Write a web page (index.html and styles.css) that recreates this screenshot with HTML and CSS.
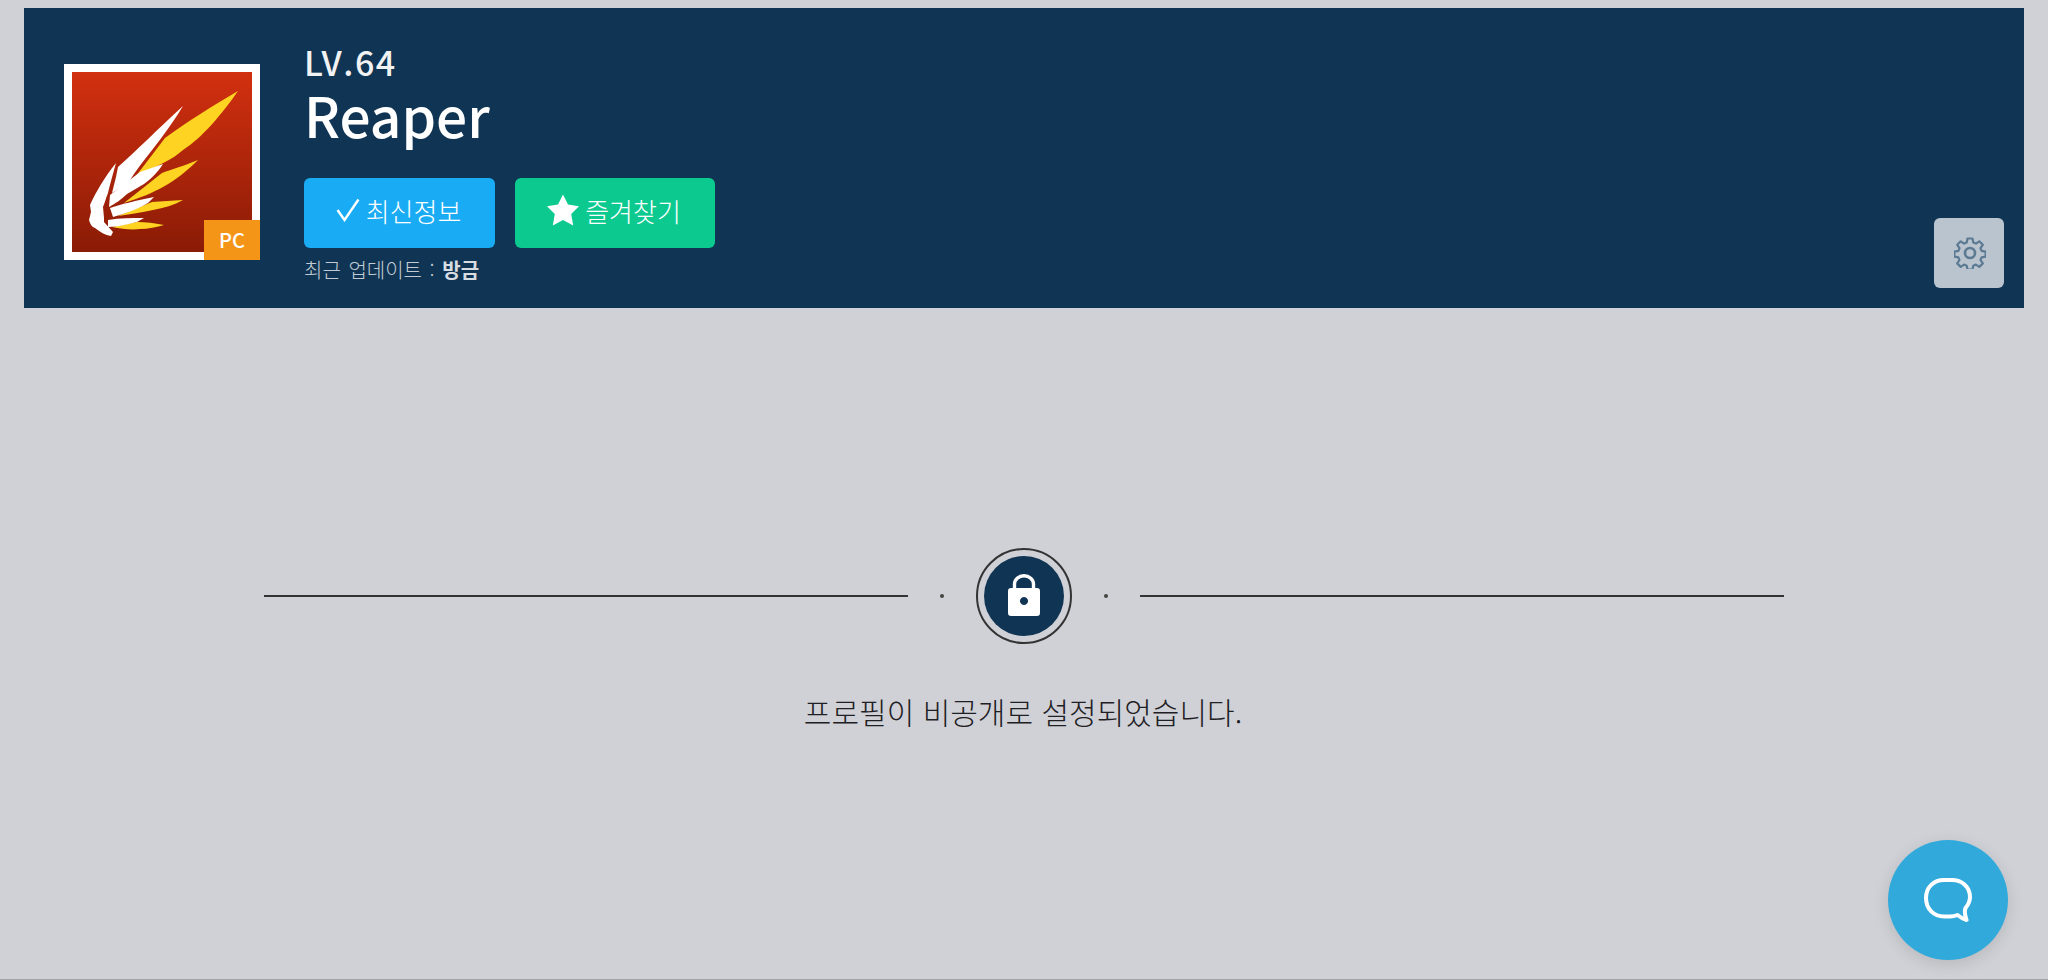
FILE: index.html
```html
<!DOCTYPE html>
<html lang="ko">

<head>
  <meta charset="UTF-8">
  <meta name="viewport" content="width=device-width, initial-scale=1.0">
  <title>Reaper</title>
  <link rel="stylesheet" href="styles.css">
</head>

<body>
  <div class="page">
    <header class="profile">
      <div class="avatar">
        <svg class="wing" viewBox="0 0 180 180" width="180" height="180">
          <defs>
            <linearGradient id="wingBg" x1="0" y1="0" x2="0" y2="1">
              <stop offset="0" stop-color="#d2300f" />
              <stop offset="1" stop-color="#8a1b06" />
            </linearGradient>
            <filter id="soft">
              <feGaussianBlur stdDeviation="0.5" />
            </filter>
          </defs>
          <rect width="180" height="180" fill="url(#wingBg)" />
          <g fill="#fed320" filter="url(#soft)">
            <path d="M166 19 C140 34 115 50 93 66 L64 104 C85 94 100 88 111 78 C130 66 150 42 166 19Z" />
            <path d="M126 88 C112 94 100 97 90 101 L52 131 C68 126 80 121 91 115 C104 108 116 98 126 88Z" />
            <path d="M111 128 C100 129 90 129 80 130 L46 144 C60 142 72 140 81 138 C92 136 102 133 111 128Z" />
            <path d="M92 153 C82 151 74 150 65 150 L40 155 C50 157 60 158 68 157 C76 157 85 155 92 153Z" />
          </g>
          <g fill="#fff" filter="url(#soft)">
            <path d="M44 91 C32 106 24 120 18 133 L19 140 L17 148 C18 152 20 155 23 156 C28 160 33 163 39 164 L41 160 L32 150 L32 146 L31 135 C33 130 34 126 36 121 C38 112 41 102 44 91Z" />
            <path d="M111 34 C85 58 65 78 46 95 L44 105 L40 121 L56 111 L62 102 C70 90 82 76 90 65 C97 55 104 46 111 34Z" />
            <path d="M91 92 L68 100 L55 110 L38 123 L37 135 C44 131 50 127 55 122 L72 112 C78 108 86 100 91 92Z" />
            <path d="M82 125 C66 128 50 132 38 136 L41 145 C52 142 64 138 76 131Z" />
            <path d="M72 146 C60 146 48 146 36 148 L36 155 C46 155 56 152 65 150Z" />
          </g>
        </svg>
        <span class="platform">PC</span>
      </div>
      <div class="info">
        <div class="level">LV.64</div>
        <h1 class="name">Reaper</h1>
        <div class="buttons">
          <a class="btn btn-refresh" href="#">
            <svg viewBox="0 0 24 24" width="24" height="24">
              <path d="M1.500 12 L8.500 22 L22.500 1.500" fill="none" stroke="#fff" stroke-width="2.400" />
            </svg>
            최신정보
          </a>
          <a class="btn btn-fav" href="#">
            <svg viewBox="0 0 32 32" width="32" height="32">
              <path d="M16 0.500 L21 10.500 L32 12.200 L24.200 20 L26.200 31.500 L16 26 L5.800 31.500 L7.800 20 L0 12.200 L11 10.500Z" fill="#fff" />
            </svg>
            즐겨찾기
          </a>
        </div>
        <div class="updated">최근 업데이트 : <b>방금</b></div>
      </div>
      <a class="settings" href="#">
        <svg viewBox="0 0 32 32" width="32" height="32" fill="none" stroke="#5d7a93" stroke-width="2.200">
          <path d="M13.500 1.500 h5 l0.800 4 l2.600 1.100 l3.400 -2.300 l3.500 3.500 l-2.300 3.400 l1.100 2.600 l4 0.800 v5 l-4 0.800 l-1.100 2.600 l2.300 3.400 l-3.500 3.500 l-3.400 -2.300 l-2.600 1.100 l-0.800 4 h-5 l-0.800 -4 l-2.600 -1.100 l-3.400 2.300 l-3.500 -3.500 l2.300 -3.400 l-1.100 -2.600 l-4 -0.800 v-5 l4 -0.800 l1.100 -2.600 l-2.300 -3.400 l3.500 -3.500 l3.400 2.300 l2.600 -1.100Z" stroke-linejoin="round" />
          <circle cx="16" cy="16" r="5" stroke-width="2.600" />
        </svg>
      </a>
    </header>

    <main class="private">
      <div class="divider">
        <span class="line"></span>
        <span class="dot"></span>
        <span class="lock">
          <span class="lock-inner">
            <svg viewBox="0 0 32 42" width="32" height="42">
              <path d="M6.500 16 V10.200 a9.500 8.500 0 0 1 19 0 V16" fill="none" stroke="#fff" stroke-width="3.400" />
              <path d="M3 14 H29 a3 3 0 0 1 3 3 V39 a3 3 0 0 1 -3 3 H3 a3 3 0 0 1 -3 -3 V17 a3 3 0 0 1 3 -3Z M16 23 a4 4 0 1 0 0.010 0Z" fill="#fff" fill-rule="evenodd" />
            </svg>
          </span>
        </span>
        <span class="dot"></span>
        <span class="line"></span>
      </div>
      <p class="private-text">프로필이 비공개로 설정되었습니다.</p>
    </main>
  </div>

  <a class="chat" href="#">
    <svg viewBox="0 0 48 44" width="48" height="44">
      <path d="M20 2 H28 C38 2 46 9 46 19 C46 23 44.500 26.500 41.500 30 C40.500 33 41 38 42.500 42 C38.500 41 36 39 33.500 37 C31 38 28 38.500 26 38.500 H20 C10 38.500 2 31 2 20 C2 9 10 2 20 2Z" fill="none" stroke="#fff" stroke-width="4" stroke-linejoin="round" />
    </svg>
  </a>
</body>

</html>
```

FILE: styles.css
```css
html {
  background-color: #d0d1d6;
}

body {
  margin: 0;
  font-family: "Noto Sans CJK KR", "Noto Sans", sans-serif;
  color: #fff;
}

.page {
  height: 980px;
  box-sizing: border-box;
  padding: 8px 24px 0;
  border-bottom: 1px solid #a3a5a9;
  overflow: hidden;
}

/* header */
.profile {
  display: flex;
  height: 300px;
  box-sizing: border-box;
  padding: 20px;
  padding-left: 40px;
  background-color: #103554;
}

.avatar {
  position: relative;
  width: 196px;
  height: 196px;
  box-sizing: border-box;
  margin-top: 36px;
  border: 8px solid #fff;
}

.wing {
  display: block;
}

.platform {
  position: absolute;
  right: -8px;
  bottom: -8px;
  width: 56px;
  height: 40px;
  background-color: #f59518;
  font-size: 20px;
  font-weight: 500;
  line-height: 40px;
  text-align: center;
}

.info {
  margin-left: 44px;
}

.level {
  margin-top: 16px;
  font-size: 34px;
  font-weight: 500;
  letter-spacing: 1.5px;
  line-height: 36px;
  color: #f2f2f2;
}

.name {
  margin: -1px 0 0;
  font-size: 55px;
  font-weight: 500;
  line-height: 70px;
}

.buttons {
  display: flex;
  gap: 20px;
  margin-top: 29px;
}

.btn {
  display: flex;
  align-items: center;
  justify-content: center;
  gap: 6px;
  height: 70px;
  box-sizing: border-box;
  padding-right: 2px;
  padding-bottom: 6px;
  border-radius: 6px;
  color: #fff;
  font-size: 26px;
  font-weight: 300;
  text-decoration: none;
}

.btn-refresh {
  width: 191px;
  background-color: #19abf3;
}

.btn-fav {
  width: 200px;
  background-color: #0cc98f;
}

.updated {
  margin-top: 7px;
  font-size: 20px;
  font-weight: 300;
  word-spacing: 2px;
  line-height: 30px;
  color: #c3ccd4;
}

.updated b {
  font-weight: 700;
  color: #d8dde2;
}

.settings {
  display: flex;
  align-items: center;
  justify-content: center;
  width: 70px;
  height: 70px;
  box-sizing: border-box;
  padding-left: 2px;
  margin-left: auto;
  margin-top: 190px;
  border-radius: 6px;
  background-color: #b9c4ce;
}

/* private message */
.private {
  padding: 0 240px;
}

.divider {
  display: flex;
  align-items: center;
  margin-top: 240px;
}

.line {
  flex: 1;
  height: 2px;
  background-color: #333;
}

.dot {
  width: 4px;
  height: 4px;
  margin: 0 32px;
  border-radius: 50%;
  background-color: #444;
}

.lock {
  display: flex;
  align-items: center;
  justify-content: center;
  width: 96px;
  height: 96px;
  box-sizing: border-box;
  border: 2px solid #333;
  border-radius: 50%;
}

.lock-inner {
  display: flex;
  align-items: center;
  justify-content: center;
  width: 80px;
  height: 80px;
  box-sizing: border-box;
  padding-bottom: 2px;
  border-radius: 50%;
  background-color: #103554;
}

.private-text {
  margin: 45px 0 0;
  padding-right: 2px;
  color: #1e2024;
  font-size: 30px;
  font-weight: 300;
  line-height: 44px;
  text-align: center;
}

/* chat button */
.chat {
  position: fixed;
  right: 40px;
  bottom: 20px;
  display: flex;
  align-items: center;
  justify-content: center;
  width: 120px;
  height: 120px;
  border-radius: 50%;
  background-color: #32a9db;
  box-shadow: 0 4px 16px rgba(0, 0, 0, 0.12);
}
```
